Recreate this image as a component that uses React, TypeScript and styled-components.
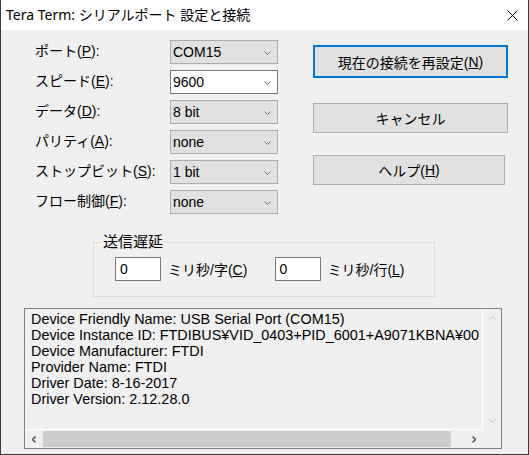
import React from 'react';
import styled, { createGlobalStyle } from 'styled-components';

const GlobalStyle = createGlobalStyle`
  html, body {
    margin: 0;
    padding: 0;
    background: #f0f0f0;
  }
  body {
    font-family: 'Liberation Sans', 'Noto Sans CJK JP', sans-serif;
    font-size: 14px;
    color: #000;
  }
`;

type ComboItem = { label: React.ReactNode; value: string; editable?: boolean };

const comboItems: ComboItem[] = [
  { label: <>ポート(<u>P</u>):</>, value: 'COM15' },
  { label: <>スピード(<u>E</u>):</>, value: '9600', editable: true },
  { label: <>データ(<u>D</u>):</>, value: '8 bit' },
  { label: <>パリティ(<u>A</u>):</>, value: 'none' },
  { label: <>ストップビット(<u>S</u>):</>, value: '1 bit' },
  { label: <>フロー制御(<u>F</u>):</>, value: 'none' },
];

// the visible part of the read-only box, as the reference shows it
const infoLines = [
  'Device Friendly Name: USB Serial Port (COM15)',
  'Device Instance ID: FTDIBUS¥VID_0403+PID_6001+A9071KBNA¥00',
  'Device Manufacturer: FTDI',
  'Provider Name: FTDI',
  'Driver Date: 8-16-2017',
  'Driver Version: 2.12.28.0',
];

const Chevron = ({ dir, color }: { dir: 'up' | 'down' | 'left' | 'right'; color: string }) => {
  const paths = {
    down: 'M0.5 0.5 L3.5 3.5 L6.5 0.5',
    up: 'M0.5 3.5 L3.5 0.5 L6.5 3.5',
    left: 'M3.5 0.5 L0.5 3.5 L3.5 6.5',
    right: 'M0.5 0.5 L3.5 3.5 L0.5 6.5',
  };
  const vertical = dir === 'up' || dir === 'down';
  return (
    <svg width={vertical ? 7 : 4} height={vertical ? 4 : 7} viewBox={vertical ? '0 0 7 4' : '0 0 4 7'}>
      <path d={paths[dir]} fill="none" stroke={color} strokeWidth={vertical ? 1 : 1.6} />
    </svg>
  );
};

const App = () => {
  return (
    <>
      <GlobalStyle />
      <Window>
        <TitleBar>
          <TitleText>Tera Term: シリアルポート 設定と接続</TitleText>
          <CloseButton>
            <svg width="11" height="11" viewBox="0 0 11 11">
              <path d="M0.5 0.5 L10.5 10.5 M10.5 0.5 L0.5 10.5" stroke="#000" strokeWidth="1" />
            </svg>
          </CloseButton>
        </TitleBar>
        <Body>
          <TopRow>
            <FormGrid>
              {comboItems.map((item, i) => (
                <React.Fragment key={i}>
                  <FieldLabel>{item.label}</FieldLabel>
                  <Combo $editable={item.editable}>
                    <span>{item.value}</span>
                    <Chevron dir="down" color="#707070" />
                  </Combo>
                </React.Fragment>
              ))}
            </FormGrid>
            <ButtonColumn>
              <DialogButton $default $w={195} $h={33}>
                現在の接続を再設定(<u>N</u>)
              </DialogButton>
              <DialogButton $w={195} $h={30} $gap={25}>
                キャンセル
              </DialogButton>
              <DialogButton $w={192} $h={30} $gap={22}>
                ヘルプ(<u>H</u>)
              </DialogButton>
            </ButtonColumn>
          </TopRow>

          <GroupBox>
            <GroupTitle>送信遅延</GroupTitle>
            <EditPair>
              <Edit>0</Edit>
              <EditLabel>ミリ秒/字(<u>C</u>)</EditLabel>
            </EditPair>
            <EditPair>
              <Edit>0</Edit>
              <EditLabel>ミリ秒/行(<u>L</u>)</EditLabel>
            </EditPair>
          </GroupBox>

          <InfoBox>
            <InfoText>
              {infoLines.map((line) => (
                <div key={line}>{line}</div>
              ))}
            </InfoText>
            <VScroll>
              <ArrowCell>
                <Chevron dir="up" color="#c0c0c0" />
              </ArrowCell>
              <ArrowCell>
                <Chevron dir="down" color="#c0c0c0" />
              </ArrowCell>
            </VScroll>
            <HScroll>
              <ArrowCell>
                <Chevron dir="left" color="#606060" />
              </ArrowCell>
              <Track>
                <Thumb />
              </Track>
              <ArrowCell>
                <Chevron dir="right" color="#606060" />
              </ArrowCell>
            </HScroll>
            <Corner />
          </InfoBox>
        </Body>
      </Window>
    </>
  );
};

export default App;

const Window = styled.div`
  width: 529px;
  height: 455px;
  box-sizing: border-box;
  border: 1px solid #3c3c3c;
  border-top: none;
  background: #f0f0f0;
  display: flex;
  flex-direction: column;
  overflow: hidden;
`;

const TitleBar = styled.div`
  display: flex;
  align-items: center;
  justify-content: space-between;
  height: 30px;
  flex-shrink: 0;
  background: #ffffff;
  padding-left: 5px;
`;

const TitleText = styled.div`
  font-family: 'Noto Sans', 'Noto Sans CJK JP', sans-serif;
  font-size: 14px;
  line-height: 16px;
  color: #000;
  white-space: nowrap;
`;

const CloseButton = styled.div`
  display: flex;
  align-items: center;
  justify-content: center;
  width: 32px;
  height: 30px;
`;

const Body = styled.div`
  display: flex;
  flex-direction: column;
  align-items: flex-start;
`;

const TopRow = styled.div`
  display: flex;
  align-items: flex-start;
  margin-top: 10px;
  padding-left: 34px;
`;

const FormGrid = styled.div`
  display: grid;
  grid-template-columns: 135px 108px;
  grid-auto-rows: 24px;
  row-gap: 6px;
  align-items: center;
`;

const FieldLabel = styled.div`
  font-size: 14px;
  line-height: 16px;
  white-space: nowrap;
  margin-top: -2px;
`;

const Combo = styled.div<{ $editable?: boolean }>`
  box-sizing: border-box;
  height: 24px;
  display: flex;
  align-items: center;
  justify-content: space-between;
  padding: 0 6px 0 2px;
  border: 1px solid ${(p) => (p.$editable ? '#7a7a7a' : '#adadad')};
  background: ${(p) => (p.$editable ? '#ffffff' : '#e1e1e1')};
  font-size: 14px;

  svg {
    margin-top: 1px;
  }
`;

const ButtonColumn = styled.div`
  display: flex;
  flex-direction: column;
  margin-left: 35px;
  padding-top: 5px;
`;

const DialogButton = styled.div<{ $default?: boolean; $w: number; $h: number; $gap?: number }>`
  box-sizing: border-box;
  width: ${(p) => p.$w}px;
  height: ${(p) => p.$h}px;
  margin-top: ${(p) => p.$gap ?? 0}px;
  display: flex;
  align-items: center;
  justify-content: center;
  background: #e1e1e1;
  border: ${(p) => (p.$default ? '2px solid #0078d7' : '1px solid #adadad')};
  font-size: 14px;
  white-space: nowrap;
`;

const GroupBox = styled.div`
  position: relative;
  box-sizing: border-box;
  display: flex;
  align-items: flex-start;
  width: 342px;
  height: 55px;
  margin-top: 28px;
  margin-left: 92px;
  padding: 14px 0 0 21px;
  border: 1px solid #dcdcdc;
`;

const GroupTitle = styled.div`
  position: absolute;
  top: -9px;
  left: 7px;
  padding: 0 2px;
  background: #f0f0f0;
  font-size: 15px;
  line-height: 16px;
`;

const EditPair = styled.div`
  display: flex;
  align-items: center;
  width: 160px;
`;

const Edit = styled.div`
  box-sizing: border-box;
  width: 46px;
  height: 24px;
  display: flex;
  align-items: center;
  padding-left: 4px;
  background: #ffffff;
  border: 1px solid #7a7a7a;
  font-size: 14px;
`;

const EditLabel = styled.div`
  margin-left: 7px;
  font-size: 14px;
  white-space: nowrap;
`;

const InfoBox = styled.div`
  box-sizing: border-box;
  display: grid;
  grid-template-columns: 1fr 18px;
  grid-template-rows: 1fr 18px;
  width: 478px;
  height: 141px;
  margin-top: 11px;
  margin-left: 23px;
  border: 1px solid #828282;
`;

const InfoText = styled.div`
  overflow: hidden;
  white-space: pre;
  padding: 2px 0 0 6px;
  font-size: 14.4px;
  line-height: 16px;
  border-right: 1px solid #ffffff;
  border-bottom: 1px solid #ffffff;
`;

const VScroll = styled.div`
  display: flex;
  flex-direction: column;
  justify-content: space-between;
  background: #f0f0f0;
`;

const ArrowCell = styled.div`
  width: 18px;
  height: 18px;
  flex-shrink: 0;
  display: flex;
  align-items: center;
  justify-content: center;
`;

const HScroll = styled.div`
  display: flex;
  align-items: stretch;
  background: #f0f0f0;
`;

const Track = styled.div`
  flex: 1;
  display: flex;
  align-items: stretch;
  padding: 1px 0;
`;

const Thumb = styled.div`
  width: 408px;
  background: #cdcdcd;
`;

const Corner = styled.div`
  background: #f0f0f0;
`;
